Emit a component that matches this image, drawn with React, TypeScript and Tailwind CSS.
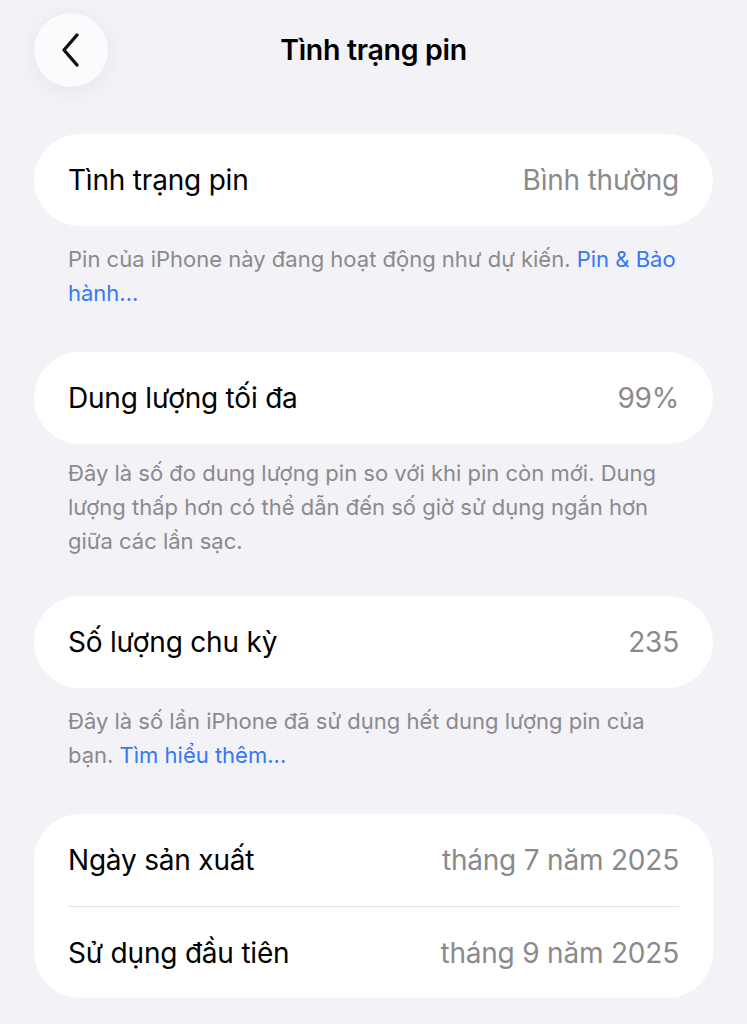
import { ReactNode } from 'react'

type Row = { label: string; value: string }

function Card({ rows }: { rows: Row[] }) {
  return (
    <div className="bg-white rounded-[46px] px-[34px]">
      {rows.map((r, i) => (
        <div
          key={r.label}
          className={`flex h-[92px] items-center justify-between ${i > 0 ? 'border-t border-[#e3e3e8]' : ''}`}
        >
          <span className="text-[28px] text-black tracking-[-0.2px]">{r.label}</span>
          <span className="text-[28px] text-[#8a8a8e] tracking-[-0.2px]">{r.value}</span>
        </div>
      ))}
    </div>
  )
}

function Footer({ children, tight }: { children: ReactNode; tight?: boolean }) {
  return (
    <p className={`px-[34px] ${tight ? 'pt-[12px]' : 'pt-[16px]'} text-[22px] leading-[34px] text-[#8a8a8e]`}>
      {children}
    </p>
  )
}

export default function App() {
  return (
    <div
      className="min-h-[1024px] w-[747px] bg-[#f2f2f7] overflow-hidden"
      style={{ fontFamily: 'Inter, "Noto Sans", sans-serif' }}
    >
      {/* header */}
      <div className="relative flex h-[100px] items-center justify-center">
        <button className="absolute left-[34px] top-[13px] flex h-[74px] w-[74px] items-center justify-center rounded-full bg-[#fbfbfd] shadow-[0_4px_24px_rgba(0,0,0,0.06)]">
          <svg width="22" height="36" viewBox="0 0 22 36" fill="none">
            <path d="M17 3 L4 18 L17 33" stroke="#111" strokeWidth="3.4" strokeLinecap="round" strokeLinejoin="round" />
          </svg>
        </button>
        <h1 className="text-[28.5px] font-semibold text-black tracking-[-0.3px]">Tình trạng pin</h1>
      </div>

      <div className="px-[34px] pt-[34px]">
        <Card rows={[{ label: 'Tình trạng pin', value: 'Bình thường' }]} />
        <Footer>
          Pin của iPhone này đang hoạt động như dự kiến.{' '}
          <span className="text-[#3478f6]">Pin &amp; Bảo hành...</span>
        </Footer>

        <div className="mt-[42px]">
          <Card rows={[{ label: 'Dung lượng tối đa', value: '99%' }]} />
          <Footer tight>
            Đây là số đo dung lượng pin so với khi pin còn mới. Dung lượng thấp hơn có thể dẫn đến số giờ sử dụng ngắn hơn giữa các lần sạc.
          </Footer>
        </div>

        <div className="mt-[38px]">
          <Card rows={[{ label: 'Số lượng chu kỳ', value: '235' }]} />
          <Footer>
            Đây là số lần iPhone đã sử dụng hết dung lượng pin của bạn.{' '}
            <span className="text-[#3478f6]">Tìm hiểu thêm...</span>
          </Footer>
        </div>

        <div className="mt-[42px]">
          <Card
            rows={[
              { label: 'Ngày sản xuất', value: 'tháng 7 năm 2025' },
              { label: 'Sử dụng đầu tiên', value: 'tháng 9 năm 2025' },
            ]}
          />
        </div>
      </div>
    </div>
  )
}
